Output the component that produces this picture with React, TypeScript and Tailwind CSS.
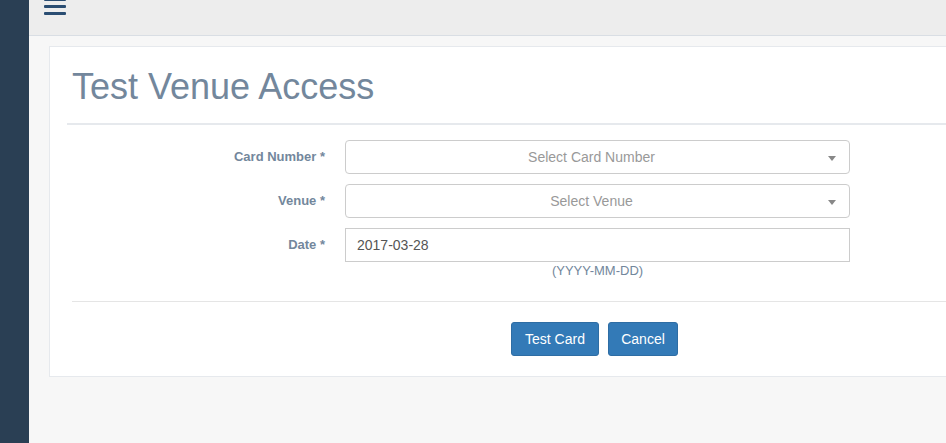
import React from "react"

function SelectBox({ placeholder }: { placeholder: string }) {
  return (
    <div className="relative flex h-[34px] w-[505px] items-center justify-center rounded-[4px] border border-[#cccccc] bg-white pr-[12px] text-[14px] text-[#999999]">
      <span>{placeholder}</span>
      <span className="absolute right-[13px] top-[15px] h-0 w-0 border-x-[4px] border-t-[5px] border-x-transparent border-t-[#888888]" />
    </div>
  )
}

function FormRow({ label, children }: { label: string; children: React.ReactNode }) {
  return (
    <div className="flex items-start">
      <label className="w-[258px] pt-[8px] text-right text-[13px] font-bold leading-[18px] text-[#73879c]">{label}</label>
      <div className="ml-[20px]">{children}</div>
    </div>
  )
}

export default function App() {
  return (
    <div className="flex h-[443px] w-[946px] overflow-hidden font-['Liberation_Sans',Arial,sans-serif]">
      <div className="w-[29px] shrink-0 bg-[#2a3f54]" />
      <div className="flex min-w-0 flex-1 flex-col bg-[#f7f7f7]">
        <div className="h-[36px] shrink-0 border-b border-[#d9dee4] bg-[#ededed] pl-[15px]">
          <div className="mt-[-2px] flex w-[22px] flex-col gap-[4px]">
            <span className="h-[3px] rounded-[1px] bg-[#2a4d72]" />
            <span className="h-[3px] rounded-[1px] bg-[#2a4d72]" />
            <span className="h-[3px] rounded-[1px] bg-[#2a4d72]" />
          </div>
        </div>
        <div className="pl-[20px] pt-[10px]">
          <div className="w-[920px] border border-[#e6e9ed] bg-white px-[17px] pb-[20px] pt-[10px]">
            <div className="border-b-2 border-[#e6e9ed] px-[5px] pb-[17px] pt-[10px]">
              <h1 className="text-[36px] leading-[39px] font-normal text-[#73879c]">Test Venue Access</h1>
            </div>
            <div className="mt-[15px] flex flex-col gap-[10px]">
              <FormRow label="Card Number *">
                <SelectBox placeholder="Select Card Number" />
              </FormRow>
              <FormRow label="Venue *">
                <SelectBox placeholder="Select Venue" />
              </FormRow>
              <FormRow label="Date *">
                <div className="flex h-[34px] w-[505px] items-center border border-[#cccccc] bg-white pl-[11px] text-[14px] text-[#555555]">
                  2017-03-28
                </div>
                <div className="text-center text-[13px] leading-[17px] text-[#73879c]">(YYYY-MM-DD)</div>
              </FormRow>
            </div>
            <div className="ml-[5px] mt-[22px] border-t border-[#e5e5e5]" />
            <div className="mt-[20px] flex gap-[9px] pl-[444px]">
              <button className="h-[34px] w-[88px] rounded-[3px] border border-[#2e6da4] bg-[#337ab7] text-[14px] text-white">
                Test Card
              </button>
              <button className="h-[34px] w-[70px] rounded-[3px] border border-[#2e6da4] bg-[#337ab7] text-[14px] text-white">
                Cancel
              </button>
            </div>
          </div>
        </div>
      </div>
    </div>
  )
}
